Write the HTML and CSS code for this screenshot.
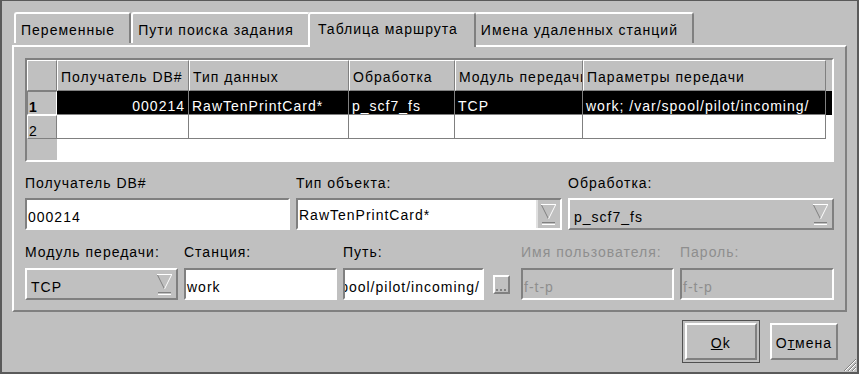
FILE: index.html
```html
<!DOCTYPE html>
<html>
<head>
  <title>Таблица маршрута</title>
  <link rel="stylesheet" href="styles.css">
</head>
<body>
  <div class="window">
    <div class="tabs">
      <div class="tab">Переменные</div>
      <div class="tab">Пути поиска задания</div>
      <div class="tab active">Таблица маршрута</div>
      <div class="tab">Имена удаленных станций</div>
    </div>

    <div class="panel">
      <div class="grid-frame">
        <table class="grid">
          <colgroup>
            <col class="c-rh">
            <col class="c-db">
            <col class="c-type">
            <col class="c-proc">
            <col class="c-mod">
            <col class="c-par">
            <col>
          </colgroup>
          <thead>
            <tr>
              <th class="corner"></th>
              <th>Получатель DB#</th>
              <th>Тип данных</th>
              <th>Обработка</th>
              <th>Модуль передачи</th>
              <th>Параметры передачи</th>
              <th class="rest"></th>
            </tr>
          </thead>
          <tbody>
            <tr class="sel">
              <td class="rh cur">1</td>
              <td class="num">000214</td>
              <td>RawTenPrintCard*</td>
              <td>p_scf7_fs</td>
              <td>TCP</td>
              <td>work; /var/spool/pilot/incoming/</td>
              <td class="rest"></td>
            </tr>
            <tr>
              <td class="rh">2</td>
              <td></td>
              <td></td>
              <td></td>
              <td></td>
              <td></td>
              <td class="rest"></td>
            </tr>
            <tr class="fill">
              <td class="rh-fill"></td>
              <td colspan="6"></td>
            </tr>
          </tbody>
        </table>
      </div>

      <div class="form form-top">
        <label>Получатель DB#</label>
        <label>Тип объекта:</label>
        <label>Обработка:</label>

        <div class="edit">000214</div>
        <div class="combo editable">
          <div class="combo-edit">RawTenPrintCard*</div>
          <svg class="arrow" width="17" height="22" viewBox="0 0 17 22">
            <path d="M1 0.5H16" stroke="#fff" fill="none"/>
            <path d="M1.5 1L8.5 15" stroke="#808080" fill="none"/>
            <path d="M15.5 1L8.5 15" stroke="#fff" fill="none"/>
            <path d="M2 18.5H15" stroke="#808080" fill="none"/>
            <path d="M2 20.5H15" stroke="#fff" fill="none"/>
          </svg>
        </div>
        <div class="combo">
          <span class="combo-text">p_scf7_fs</span>
          <svg class="arrow" width="17" height="22" viewBox="0 0 17 22">
            <path d="M1 0.5H16" stroke="#fff" fill="none"/>
            <path d="M1.5 1L8.5 15" stroke="#808080" fill="none"/>
            <path d="M15.5 1L8.5 15" stroke="#fff" fill="none"/>
            <path d="M2 18.5H15" stroke="#808080" fill="none"/>
            <path d="M2 20.5H15" stroke="#fff" fill="none"/>
          </svg>
        </div>
      </div>

      <div class="form form-bottom">
        <label>Модуль передачи:</label>
        <label>Станция:</label>
        <label>Путь:</label>
        <span></span>
        <label class="disabled">Имя пользователя:</label>
        <label class="disabled">Пароль:</label>

        <div class="combo">
          <span class="combo-text">TCP</span>
          <svg class="arrow" width="17" height="22" viewBox="0 0 17 22">
            <path d="M1 0.5H16" stroke="#fff" fill="none"/>
            <path d="M1.5 1L8.5 15" stroke="#808080" fill="none"/>
            <path d="M15.5 1L8.5 15" stroke="#fff" fill="none"/>
            <path d="M2 18.5H15" stroke="#808080" fill="none"/>
            <path d="M2 20.5H15" stroke="#fff" fill="none"/>
          </svg>
        </div>
        <div class="edit">work</div>
        <div class="edit scroll"><span>/var/spool/pilot/incoming/</span></div>
        <div class="dots">
          <svg width="13" height="15" viewBox="0 0 13 15">
            <rect x="1" y="12" width="2" height="2" fill="#808080"/>
            <rect x="5" y="12" width="2" height="2" fill="#808080"/>
            <rect x="9" y="12" width="2" height="2" fill="#808080"/>
          </svg>
        </div>
        <div class="edit disabled">f-t-p</div>
        <div class="edit disabled">f-t-p</div>
      </div>
    </div>

    <div class="buttons">
      <div class="default-frame">
        <button class="btn ok"><u>O</u>k</button>
      </div>
      <button class="btn">О<u>т</u>мена</button>
    </div>

    <svg class="grip" width="14" height="14" viewBox="0 0 14 14">
      <path d="M13 1L1 13M13 5L5 13M13 9L9 13" stroke="#808080" fill="none"/>
      <path d="M13 2L2 13M13 6L6 13M13 10L10 13" stroke="#fff" fill="none"/>
    </svg>
  </div>
</body>
</html>
```

FILE: styles.css
```css
* {
  box-sizing: border-box;
}

body {
  margin: 0;
  background: #c0c0c0;
  color: #000;
  font-family: "Liberation Sans", Arial, sans-serif;
  font-size: 14px;
  letter-spacing: 1px;
  line-height: 16px;
}

.window {
  position: relative;
  width: 859px;
  height: 374px;
  padding: 11px 10px 0 10px;
  border: 2px solid #5a5a5a;
  border-top-width: 1px;
  background: #c0c0c0;
}

/* tabs */

.tabs {
  position: relative;
  z-index: 1;
  display: flex;
  align-items: flex-end;
  height: 35px;
  margin-bottom: -2px;
  padding-left: 2px;
}

.tab {
  height: 31px;
  margin-bottom: 4px;
  padding: 8px 14px 0 5px;
  border: 2px solid;
  border-bottom: 0;
  border-color: #fff #808080 #808080 #fff;
  border-radius: 3px 3px 0 0;
  background: #c0c0c0;
  white-space: nowrap;
}

.tab.active {
  position: relative;
  z-index: 2;
  height: 35px;
  margin: 0 -2px;
  padding: 7px 16px 0 8px;
}

.panel {
  height: 267px;
  padding: 11px;
  border: 2px solid;
  border-color: #fff #808080 #808080 #fff;
}

/* table */

.grid-frame {
  height: 104px;
  border: 2px solid;
  border-color: #808080 #fff #fff #808080;
  background: #fff;
}

.grid {
  width: 100%;
  height: 100%;
  border-collapse: separate;
  border-spacing: 0;
  table-layout: fixed;
}

.c-rh { width: 30px; }
.c-db { width: 132px; }
.c-type { width: 160px; }
.c-proc { width: 106px; }
.c-mod { width: 128px; }
.c-par { width: 243px; }

.grid th {
  height: 31px;
  padding: 8px 3px 0 3px;
  border: 1px solid;
  border-color: #fff #808080 #808080 #fff;
  background: #c0c0c0;
  font-weight: normal;
  text-align: left;
  vertical-align: top;
  white-space: nowrap;
  overflow: hidden;
}

.grid th.rest {
  border: 0;
}

.grid td {
  height: 23px;
  padding: 8px 3px 0 3px;
  border-right: 1px solid #808080;
  border-bottom: 1px solid #808080;
  line-height: 14px;
  vertical-align: top;
  white-space: nowrap;
  overflow: hidden;
}

.grid td.num {
  text-align: right;
}

.grid td.rest {
  border: 0;
}

.grid td.rh {
  padding-left: 1px;
  border: 1px solid;
  border-color: #fff #808080 #808080 #fff;
  background: #c0c0c0;
}

.grid td.rh.cur {
  border-color: #808080 #fff #fff #808080;
  font-weight: bold;
}

.grid tr.sel td {
  background: #000;
  color: #fff;
}

.grid tr.sel td.rh {
  background: #c0c0c0;
  color: #000;
}

.grid tr.fill td {
  height: auto;
  border: 0;
}

.grid tr.fill td.rh-fill {
  background: #c0c0c0;
}

/* form */

.form {
  display: grid;
  column-gap: 6px;
}

.form-top {
  grid-template-columns: 265px 266px 1fr;
  row-gap: 7px;
  margin-top: 13px;
}

.form-bottom {
  grid-template-columns: 153px 153px 141px 25px 153px 1fr;
  row-gap: 8px;
  margin-top: 14px;
}

label {
  display: block;
  white-space: nowrap;
}

label.disabled {
  color: #8e8e8e;
}

.edit {
  height: 32px;
  padding: 9px 0 0 1px;
  border: 2px solid;
  border-color: #808080 #fff #fff #808080;
  background: #fff;
  white-space: nowrap;
  overflow: hidden;
}

.edit.scroll {
  display: flex;
  justify-content: flex-end;
}

.edit.scroll span {
  flex: none;
  padding-right: 2px;
}

.edit.disabled {
  background: #c0c0c0;
  color: #8e8e8e;
}

.combo {
  display: flex;
  align-items: flex-start;
  height: 32px;
  border: 2px solid;
  border-color: #fff #808080 #808080 #fff;
  background: #c0c0c0;
}

.combo-text {
  flex: 1;
  padding: 9px 0 0 4px;
  white-space: nowrap;
}

.combo .arrow {
  flex: none;
  margin: 4px 3px 0 2px;
}

.combo.editable {
  border-color: #808080 #fff #fff #808080;
}

.combo-edit {
  flex: 1;
  height: 28px;
  padding: 7px 0 0 1px;
  background: #fff;
  border-right: 2px solid #e0e0e0;
  white-space: nowrap;
  overflow: hidden;
}

.dots {
  align-self: center;
  width: 17px;
  height: 19px;
  margin-left: 3px;
  border: 2px solid;
  border-color: #fff #808080 #808080 #fff;
}

.dots svg {
  display: block;
}

/* buttons */

.buttons {
  display: flex;
  justify-content: flex-end;
  align-items: center;
  gap: 10px;
  margin-top: 8px;
  padding-right: 9px;
}

.default-frame {
  padding: 2px;
  border: 1px solid #505050;
}

.btn {
  height: 37px;
  padding: 2px 4px 0 4px;
  border: 2px solid;
  border-color: #fff #808080 #808080 #fff;
  background: #c0c0c0;
  color: #000;
  font: inherit;
  letter-spacing: inherit;
}

.btn.ok {
  width: 72px;
}

.grip {
  position: absolute;
  right: 0;
  bottom: 0;
}
```
